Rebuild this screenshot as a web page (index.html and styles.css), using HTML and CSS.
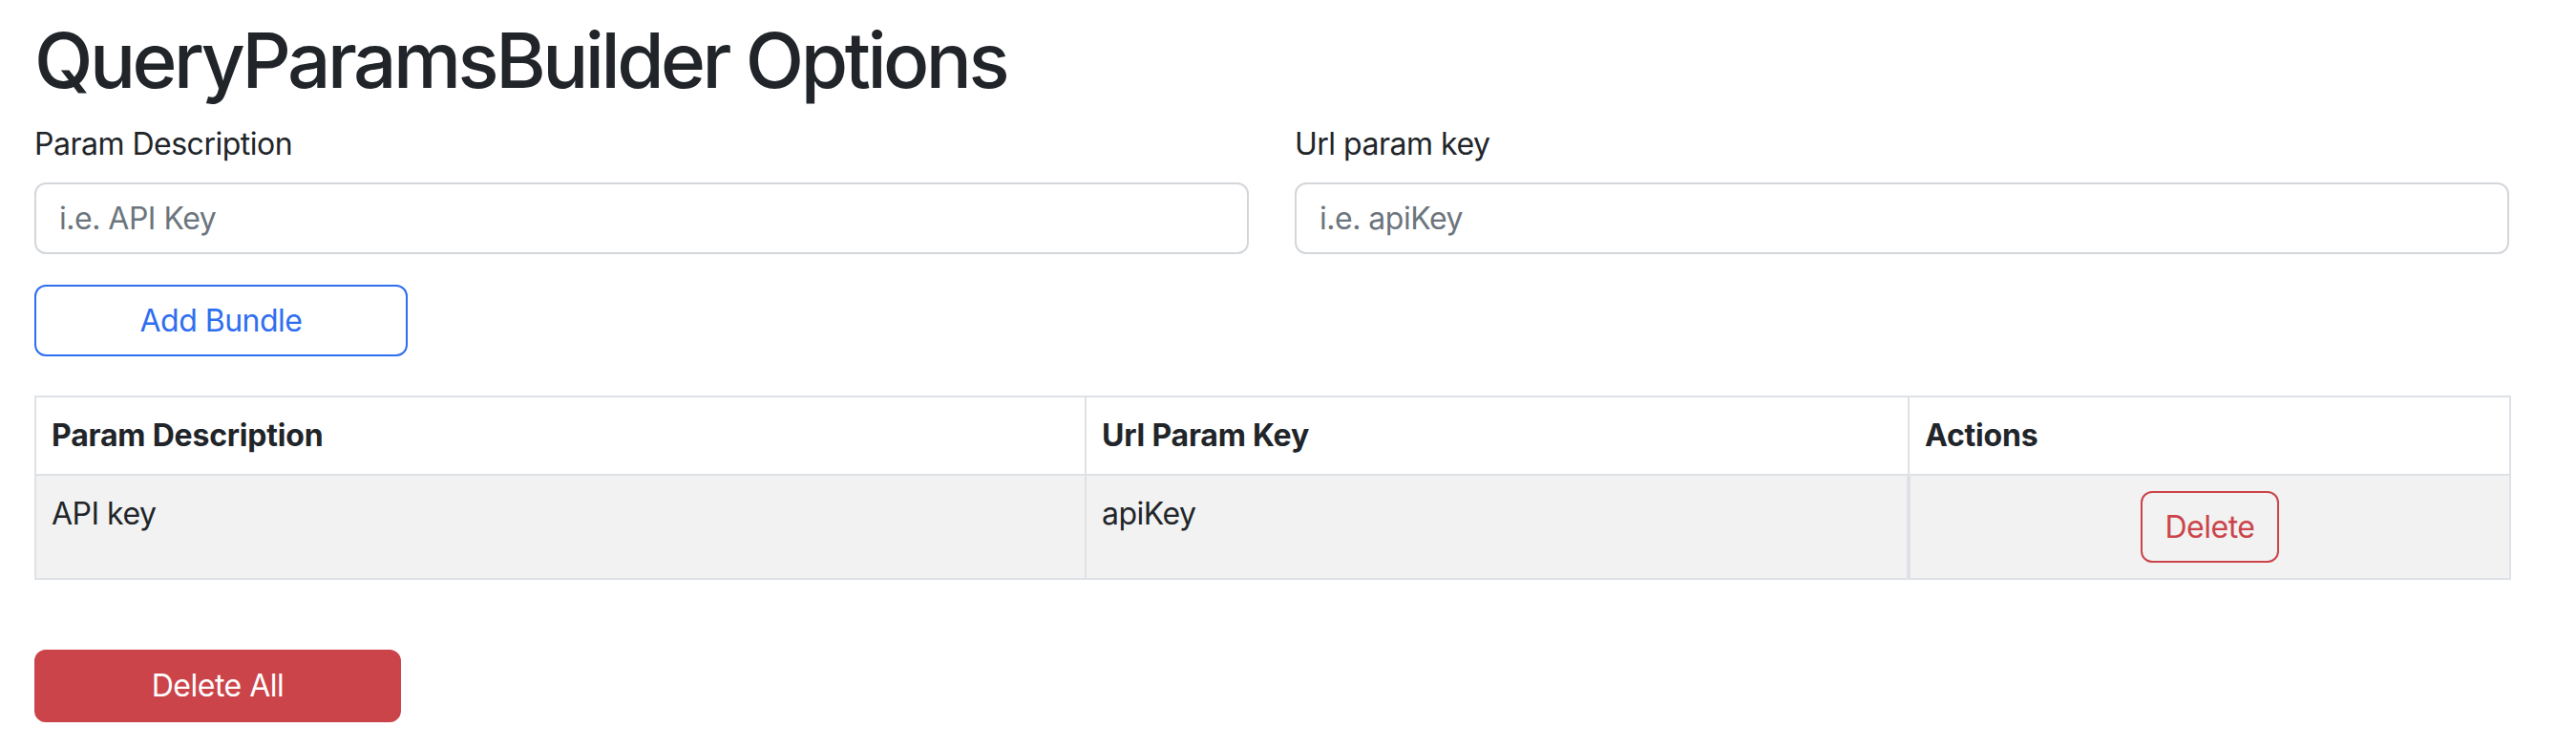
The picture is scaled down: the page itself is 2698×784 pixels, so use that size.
FILE: index.html
```html
<!DOCTYPE html>
<html lang="en">
<head>
<meta charset="utf-8">
<title>QueryParamsBuilder Options</title>
<link rel="stylesheet" href="styles.css">
</head>
<body>
<main class="page">
  <h1 class="title">QueryParamsBuilder Options</h1>
  <div class="form-row">
    <div class="field">
      <label class="label" for="desc">Param Description</label>
      <input class="input" id="desc" type="text" placeholder="i.e. API Key">
    </div>
    <div class="field">
      <label class="label" for="key">Url param key</label>
      <input class="input" id="key" type="text" placeholder="i.e. apiKey">
    </div>
  </div>
  <button class="btn btn-outline-primary btn-add" type="button">Add Bundle</button>
  <table class="params">
    <colgroup>
      <col class="col-desc">
      <col class="col-key">
      <col class="col-actions">
    </colgroup>
    <thead>
      <tr>
        <th>Param Description</th>
        <th>Url Param Key</th>
        <th>Actions</th>
      </tr>
    </thead>
    <tbody>
      <tr>
        <td>API key</td>
        <td>apiKey</td>
        <td class="actions"><button class="btn btn-outline-danger" type="button">Delete</button></td>
      </tr>
    </tbody>
  </table>
  <button class="btn btn-danger btn-delete-all" type="button">Delete All</button>
</main>
</body>
</html>
```
FILE: styles.css
```css
* { box-sizing: border-box; }

body {
  margin: 0;
  background: #ffffff;
  color: #212529;
  font-family: Inter, "Noto Sans", "Liberation Sans", sans-serif;
  font-size: 32px;
  line-height: 48px;
  letter-spacing: -0.5px;
}

.page {
  width: 2592px;
  margin-left: 36px;
  padding-top: 15px;
}

.title {
  margin: 0 0 16px;
  font-size: 80px;
  line-height: 96px;
  font-weight: 500;
  letter-spacing: -3.5px;
}

.form-row {
  display: grid;
  grid-template-columns: 1272px 1272px;
  column-gap: 48px;
}

.label {
  display: block;
  margin-bottom: 16px;
  font-size: 32px;
  line-height: 48px;
}

.input {
  display: block;
  width: 100%;
  height: 75px;
  padding: 12px 24px;
  border: 2px solid #d3d6da;
  border-radius: 12px;
  font-family: inherit;
  font-size: 32px;
  line-height: 48px;
  letter-spacing: -0.5px;
  color: #212529;
  background: #fff;
}

.input::placeholder { color: #6c757d; }

.btn {
  display: inline-flex;
  align-items: center;
  justify-content: center;
  height: 75px;
  padding: 0 24px;
  border: 2px solid transparent;
  border-radius: 12px;
  font-family: inherit;
  font-size: 32px;
  line-height: 48px;
  letter-spacing: -0.5px;
  background: transparent;
  cursor: pointer;
}

.btn-outline-primary {
  color: #2f6ef0;
  border-color: #2f6ef0;
  background: #fff;
}

.btn-add {
  margin-top: 32px;
  width: 391px;
}

.btn-outline-danger {
  color: #cb444a;
  border-color: #cb444a;
  width: 145px;
}

.btn-danger {
  color: #fff;
  background: #cb444a;
  border-color: #cb444a;
}

.btn-delete-all {
  display: flex;
  margin-top: 73px;
  width: 384px;
  height: 76px;
}

.params {
  margin-top: 41px;
  width: 2592px;
  table-layout: fixed;
  border-collapse: collapse;
  border: 2px solid #dee2e6;
}

.col-desc { width: 1100px; }
.col-key { width: 862px; }
.col-actions { width: 630px; }

.params th,
.params td {
  padding: 16px;
  border: 2px solid #dee2e6;
  text-align: left;
  vertical-align: top;
  font-size: 32px;
  line-height: 48px;
}

.params th {
  font-weight: 700;
  letter-spacing: -0.2px;
  background: #fff;
}

.params td {
  background: #f2f2f2;
  font-weight: 400;
}

.params td.actions {
  text-align: center;
  border-left-width: 4px;
}
```
